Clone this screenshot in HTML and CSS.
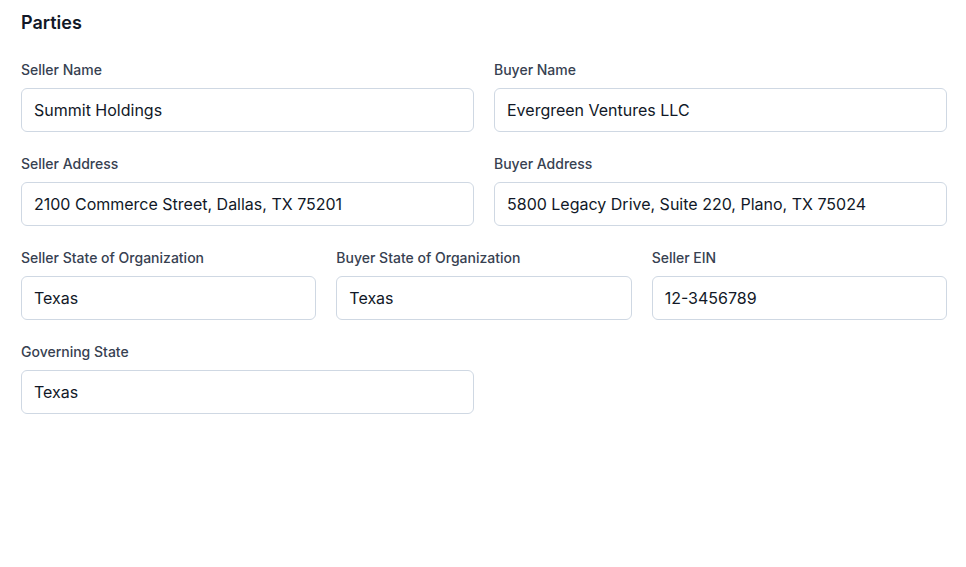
FILE: index.html
```html
<!DOCTYPE html>
<html lang="en">
<head>
    <meta charset="UTF-8">
    <meta name="viewport" content="width=device-width, initial-scale=1.0">
    <title>Parties</title>
    <link rel="stylesheet" href="styles.css">
</head>
<body>
    <section class="parties">
        <h2 class="section-title">Parties</h2>

        <div class="row cols-2">
            <div class="field">
                <label for="seller-name">Seller Name</label>
                <input id="seller-name" type="text" value="Summit Holdings">
            </div>
            <div class="field">
                <label for="buyer-name">Buyer Name</label>
                <input id="buyer-name" type="text" value="Evergreen Ventures LLC">
            </div>
        </div>

        <div class="row cols-2">
            <div class="field">
                <label for="seller-address">Seller Address</label>
                <input id="seller-address" type="text" value="2100 Commerce Street, Dallas, TX 75201">
            </div>
            <div class="field">
                <label for="buyer-address">Buyer Address</label>
                <input id="buyer-address" type="text" value="5800 Legacy Drive, Suite 220, Plano, TX 75024">
            </div>
        </div>

        <div class="row cols-3">
            <div class="field">
                <label for="seller-state">Seller State of Organization</label>
                <input id="seller-state" type="text" value="Texas">
            </div>
            <div class="field">
                <label for="buyer-state">Buyer State of Organization</label>
                <input id="buyer-state" type="text" value="Texas">
            </div>
            <div class="field">
                <label for="seller-ein">Seller EIN</label>
                <input id="seller-ein" type="text" value="12-3456789">
            </div>
        </div>

        <div class="row cols-2">
            <div class="field">
                <label for="governing-state">Governing State</label>
                <input id="governing-state" type="text" value="Texas">
            </div>
        </div>
    </section>
</body>
</html>
```

FILE: styles.css
```css
* {
    box-sizing: border-box;
}

body {
    margin: 0;
    background: #ffffff;
    font-family: Inter, "Noto Sans", sans-serif;
    color: #111827;
}

.parties {
    padding: 9px 19px 20px 21px;
}

.section-title {
    margin: 0 0 23px 0;
    font-size: 18px;
    line-height: 28px;
    font-weight: 600;
    color: #111827;
}

.row {
    display: grid;
    gap: 20px;
    margin-bottom: 22px;
}

.cols-2 {
    grid-template-columns: 1fr 1fr;
}

.cols-3 {
    grid-template-columns: 1fr 1fr 1fr;
}

.field {
    display: flex;
    flex-direction: column;
}

.field label {
    font-size: 14px;
    line-height: 20px;
    font-weight: 500;
    color: #374151;
    margin-bottom: 8px;
}

.field input {
    height: 44px;
    padding: 0 12px;
    font-family: inherit;
    font-size: 16px;
    color: #111827;
    background: #ffffff;
    border: 1px solid #cfd8e3;
    border-radius: 6px;
    outline: none;
}
```
